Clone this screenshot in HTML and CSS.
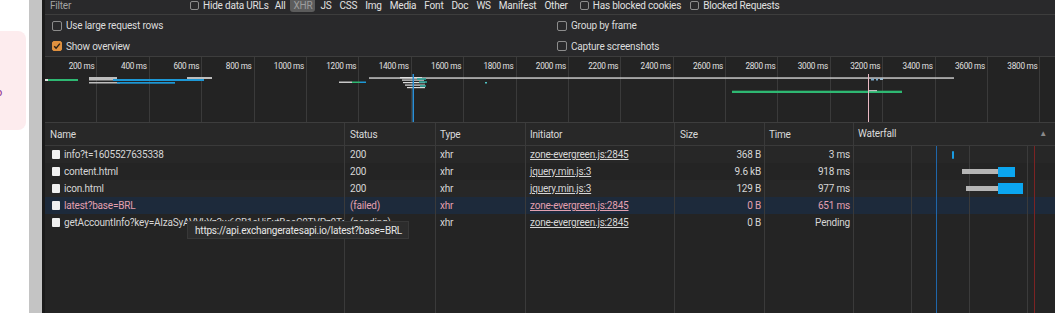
FILE: index.html
```html
<!DOCTYPE html>
<html>
<head>
<meta charset="utf-8">
<link rel="stylesheet" href="styles.css">
</head>
<body>
<div class="app">
  <aside class="page-left">
    <div class="note"><span class="note-text">o</span></div>
  </aside>
  <div class="scrollbar"></div>
  <div class="divider"></div>
  <main class="devtools">
    <div class="toolbar">
      <div class="filter">Filter</div>
      <label class="chk small"><span class="box"></span>Hide data URLs</label>
      <div class="types">
        <span class="type">All</span>
        <span class="type active">XHR</span>
        <span class="type">JS</span>
        <span class="type">CSS</span>
        <span class="type">Img</span>
        <span class="type">Media</span>
        <span class="type">Font</span>
        <span class="type">Doc</span>
        <span class="type">WS</span>
        <span class="type">Manifest</span>
        <span class="type">Other</span>
      </div>
      <label class="chk small cookies"><span class="box"></span>Has blocked cookies</label>
      <label class="chk small blocked"><span class="box"></span>Blocked Requests</label>
    </div>
    <div class="settings">
      <label class="chk"><span class="box"></span>Use large request rows</label>
      <label class="chk"><span class="box"></span>Group by frame</label>
      <label class="chk"><span class="box checked"><svg width="10" height="10" viewBox="0 0 10 10"><path d="M2.2 5.2 L4.1 7.1 L7.9 2.6" fill="none" stroke="#2a2118" stroke-width="1.4"/></svg></span>Show overview</label>
      <label class="chk"><span class="box"></span>Capture screenshots</label>
    </div>
    <div class="overview">
      <div class="ticks">
        <div class="tick"><span>200 ms</span></div>
        <div class="tick"><span>400 ms</span></div>
        <div class="tick"><span>600 ms</span></div>
        <div class="tick"><span>800 ms</span></div>
        <div class="tick"><span>1000 ms</span></div>
        <div class="tick"><span>1200 ms</span></div>
        <div class="tick"><span>1400 ms</span></div>
        <div class="tick"><span>1600 ms</span></div>
        <div class="tick"><span>1800 ms</span></div>
        <div class="tick"><span>2000 ms</span></div>
        <div class="tick"><span>2200 ms</span></div>
        <div class="tick"><span>2400 ms</span></div>
        <div class="tick"><span>2600 ms</span></div>
        <div class="tick"><span>2800 ms</span></div>
        <div class="tick"><span>3000 ms</span></div>
        <div class="tick"><span>3200 ms</span></div>
        <div class="tick"><span>3400 ms</span></div>
        <div class="tick"><span>3600 ms</span></div>
        <div class="tick"><span>3800 ms</span></div>
      </div>
      <svg class="ov-bars" width="1010" height="65" viewBox="0 0 1010 65">
        <rect x="0" y="22" width="33" height="2" fill="#2eb872"/>
        <rect x="0" y="22" width="3" height="2" fill="#dddddd"/>
        <rect x="44" y="20" width="28" height="2" fill="#bdbdbd"/>
        <rect x="44" y="22" width="33" height="1.5" fill="#bdbdbd"/>
        <rect x="68" y="22" width="91" height="2" fill="#1d98d6"/>
        <rect x="44" y="25" width="31" height="1.5" fill="#bdbdbd"/>
        <rect x="72" y="25" width="58" height="1.7" fill="#1d98d6"/>
        <rect x="142" y="20" width="25" height="2" fill="#bdbdbd"/>
        <rect x="294" y="24.5" width="13" height="1.5" fill="#c8c8c8"/>
        <rect x="307" y="24.5" width="8" height="1.5" fill="#2eb872"/>
        <rect x="315" y="24.5" width="6" height="1.5" fill="#1d98d6"/>
        <rect x="324" y="20.3" width="585" height="1.5" fill="#c8c8c8"/>
        <rect x="355" y="20" width="22" height="1.2" fill="#dddddd"/>
        <rect x="357" y="22.5" width="22" height="1.2" fill="#dddddd"/>
        <rect x="358" y="25" width="22" height="1.2" fill="#dddddd"/>
        <rect x="360" y="27.5" width="20" height="1.2" fill="#dddddd"/>
        <rect x="362" y="30" width="18" height="1.2" fill="#dddddd"/>
        <rect x="372" y="21" width="9" height="2" fill="#2aa59a" opacity="0.8"/>
        <rect x="374" y="24" width="8" height="2" fill="#2aa59a" opacity="0.8"/>
        <rect x="375" y="28" width="6" height="2" fill="#2aa59a" opacity="0.8"/>
        <rect x="367.5" y="17" width="1.5" height="48" fill="#2b8fd6"/>
        <rect x="440" y="25" width="2" height="1.5" fill="#4fc3c3"/>
        <rect x="687" y="33.7" width="170" height="2.3" fill="#2eb872"/>
        <rect x="823" y="33" width="9" height="1.2" fill="#bdbdbd"/>
        <rect x="826" y="21.5" width="3" height="2" fill="#7aa7c7"/>
        <rect x="831" y="21.5" width="2" height="2" fill="#7aa7c7"/>
        <rect x="835" y="21" width="3" height="2" fill="#9ab8cc"/>
        <rect x="823" y="17" width="1" height="48" fill="#e9b9c3"/>
      </svg>
    </div>
    <div class="table-wrap">
      <table class="net">
        <colgroup>
          <col class="c-name"><col class="c-status"><col class="c-type"><col class="c-init"><col class="c-size"><col class="c-time"><col>
        </colgroup>
        <thead>
          <tr>
            <th class="pl5">Name</th>
            <th class="pl5">Status</th>
            <th>Type</th>
            <th>Initiator</th>
            <th class="pl5">Size</th>
            <th>Time</th>
            <th class="wf-head"><div class="wf-title"><span>Waterfall</span><span class="arrow">▲</span></div></th>
          </tr>
        </thead>
        <tbody>
          <tr class="odd">
            <td class="name"><span class="ico"></span>info?t=1605527635338</td>
            <td class="pl5">200</td>
            <td>xhr</td>
            <td><span class="link">zone-evergreen.js:2845</span></td>
            <td class="num">368 B</td>
            <td class="num">3 ms</td>
            <td class="wf"><div class="wf-bars"><span class="bar blue tiny" style="margin-left:98px;width:2px"></span></div></td>
          </tr>
          <tr>
            <td class="name"><span class="ico"></span>content.html</td>
            <td class="pl5">200</td>
            <td>xhr</td>
            <td><span class="link">jquery.min.js:3</span></td>
            <td class="num">9.6 kB</td>
            <td class="num">918 ms</td>
            <td class="wf"><div class="wf-bars"><span class="bar gray" style="margin-left:108px;width:36px"></span><span class="bar blue" style="width:17px"></span></div></td>
          </tr>
          <tr class="odd">
            <td class="name"><span class="ico"></span>icon.html</td>
            <td class="pl5">200</td>
            <td>xhr</td>
            <td><span class="link">jquery.min.js:3</span></td>
            <td class="num">129 B</td>
            <td class="num">977 ms</td>
            <td class="wf"><div class="wf-bars"><span class="bar gray" style="margin-left:112px;width:32px"></span><span class="bar blue big" style="width:25px"></span></div></td>
          </tr>
          <tr class="selected failed">
            <td class="name"><span class="ico"></span>latest?base=BRL</td>
            <td class="pl5">(failed)</td>
            <td>xhr</td>
            <td><span class="link">zone-evergreen.js:2845</span></td>
            <td class="num">0 B</td>
            <td class="num">651 ms</td>
            <td class="wf"></td>
          </tr>
          <tr>
            <td class="name"><span class="ico"></span>getAccountInfo?key=AIzaSyAVVkYz3w6CB1sUi5xtBoeC0TVPz0Tq</td>
            <td class="pl5">(pending)</td>
            <td>xhr</td>
            <td><span class="link">zone-evergreen.js:2845</span></td>
            <td class="num">0 B</td>
            <td class="num">Pending</td>
            <td class="wf"></td>
          </tr>
          <tr class="filler">
            <td></td><td></td><td></td><td></td><td></td><td></td><td class="wf"></td>
          </tr>
        </tbody>
      </table>
      <div class="tooltip">https://api.exchangeratesapi.io/latest?base=BRL</div>
    </div>
  </main>
</div>
</body>
</html>
```

FILE: styles.css
```css
* { box-sizing: border-box; }

body {
  margin: 0;
  background: #ffffff;
  font-family: Roboto, "Segoe UI", "Liberation Sans", sans-serif;
  font-size: 10px;
  letter-spacing: -0.2px;
}

.app {
  display: flex;
  height: 313px;
  overflow: hidden;
}

.page-left {
  width: 29px;
  flex: none;
  background: #ffffff;
  padding-top: 31px;
}

.note {
  width: 26px;
  height: 99px;
  background: #fdecee;
  border-radius: 0 8px 8px 0;
  padding-top: 56px;
  overflow: hidden;
}

.note-text {
  display: block;
  margin-left: -4px;
  color: #8a2b8b;
  font-size: 11px;
  line-height: 12px;
}

.scrollbar {
  width: 13px;
  flex: none;
  background: #c4c4c4;
}

.divider {
  width: 3px;
  flex: none;
  background: #1b1b1b;
}

.devtools {
  flex: 1;
  min-width: 0;
  display: flex;
  flex-direction: column;
  background: #242424;
  color: #d6d6d6;
}

/* toolbar */
.toolbar {
  height: 15px;
  flex: none;
  display: flex;
  align-items: flex-start;
  background: #29292b;
  border-bottom: 1px solid #3d3d3d;
  line-height: 11px;
  white-space: nowrap;
  color: #e0e0e0;
}

.filter {
  width: 145px;
  padding-left: 5px;
  color: #a3a3a3;
}

.chk {
  display: flex;
  align-items: center;
  white-space: nowrap;
}

.box {
  width: 10px;
  height: 10px;
  border: 1px solid #8c8c8c;
  border-radius: 2px;
  margin-right: 4px;
  flex: none;
  display: flex;
}

.chk.small .box {
  width: 9px;
  height: 9px;
  margin-right: 4px;
}

.box.checked {
  background: #e0913f;
  border-color: #e0913f;
}

.box.checked svg {
  margin: -1px;
}

.types {
  display: flex;
  margin-left: 3px;
  gap: 2px;
}

.type {
  padding: 0 3px 1px;
  border-radius: 0 0 3px 3px;
  color: #e2e2e2;
}

.type.active {
  background: #5c5c5c;
  color: #9c9c9c;
}

.cookies { margin-left: 9px; }
.blocked { margin-left: 9px; }

/* settings */
.settings {
  flex: none;
  height: 42px;
  display: grid;
  grid-template-columns: 505px 1fr;
  grid-template-rows: 21px 20px;
  padding-left: 7px;
  background: #29292b;
  border-bottom: 1px solid #3d3d3d;
  color: #dcdcdc;
}

/* overview */
.overview {
  position: relative;
  flex: none;
  height: 66px;
  background: #232323;
  border-bottom: 1px solid #3d3d3d;
}

.ticks {
  display: flex;
  height: 100%;
}

.tick {
  width: 52.4px;
  flex: none;
  border-right: 1px solid #3a3a3a;
  text-align: right;
  padding: 4px 2px 0 0;
  font-size: 8.2px;
  letter-spacing: -0.25px;
  color: #e0e0e0;
  white-space: nowrap;
}

.ov-bars {
  position: absolute;
  left: 0;
  top: 0;
}

/* table */
.table-wrap {
  position: relative;
  flex: 1;
  overflow: hidden;
}

.net {
  width: 100%;
  table-layout: fixed;
  border-collapse: separate;
  border-spacing: 0;
}

.c-name { width: 300px; }
.c-status { width: 91px; }
.c-type { width: 90px; }
.c-init { width: 149px; }
.c-size { width: 90px; }
.c-time { width: 89px; }

.net th {
  height: 23px;
  font-weight: normal;
  text-align: left;
  padding: 0 0 0 4px;
  background: #282828;
  color: #dadada;
  border-right: 1px solid #3a3a3a;
  border-bottom: 1px solid #3a3a3a;
  white-space: nowrap;
}

.net th.pl5 { padding-left: 5px; }

.net th.wf-head {
  border-right: none;
  padding-bottom: 2px;
}

.wf-title {
  display: flex;
  align-items: center;
}

.arrow {
  margin-left: auto;
  margin-right: 8px;
  font-size: 8px;
  color: #8a8a8a;
}

.net td {
  height: 17px;
  padding: 0 0 0 4px;
  line-height: 17px;
  white-space: nowrap;
  overflow: hidden;
  border-right: 1px solid #3a3a3a;
  color: #d6d6d6;
}

.net td.pl5 { padding-left: 5px; }

.net tr.odd td { background-color: #272727; }

.net td.name {
  padding-left: 7px;
}

.ico {
  display: inline-block;
  width: 8px;
  height: 9px;
  background: #f0f0f0;
  border-radius: 1px;
  margin-right: 4px;
  vertical-align: -1px;
}

.link {
  text-decoration: underline;
}

.net td.num {
  text-align: right;
  padding: 0 3px 0 0;
}

.net tr.selected td {
  background-color: #1d2a3b;
}

.net tr.failed td {
  color: #e3a0b0;
}

.net tr.filler td {
  height: 82px;
}

.net td.wf {
  padding: 0;
  border-right: none;
  background-image: linear-gradient(to right,
    transparent 57px, #3b3b3b 57px, #3b3b3b 58px,
    transparent 58px, transparent 82px, #1f66aa 82px, #1f66aa 83px,
    transparent 83px, transparent 115px, #3b3b3b 115px, #3b3b3b 116px,
    transparent 116px, transparent 173px, #3b3b3b 173px, #3b3b3b 174px,
    transparent 174px, transparent 180px, #7c2323 180px, #7c2323 181px,
    transparent 181px);
}

.wf-bars {
  display: flex;
  align-items: center;
  height: 17px;
}

.bar {
  display: block;
  flex: none;
}

.bar.gray {
  height: 5px;
  background: #b5b5b5;
}

.bar.blue {
  height: 10px;
  background: #0ba6f0;
}

.bar.blue.big { height: 11px; }

.bar.blue.tiny {
  height: 8px;
  border-radius: 1px;
  background: #1a9be0;
}

.tooltip {
  position: absolute;
  left: 142px;
  top: 98px;
  height: 18px;
  padding: 0 6px 0 7px;
  line-height: 17px;
  background: #2c2c2c;
  border: 1px solid #383838;
  color: #e6e6e6;
  white-space: nowrap;
}
```
